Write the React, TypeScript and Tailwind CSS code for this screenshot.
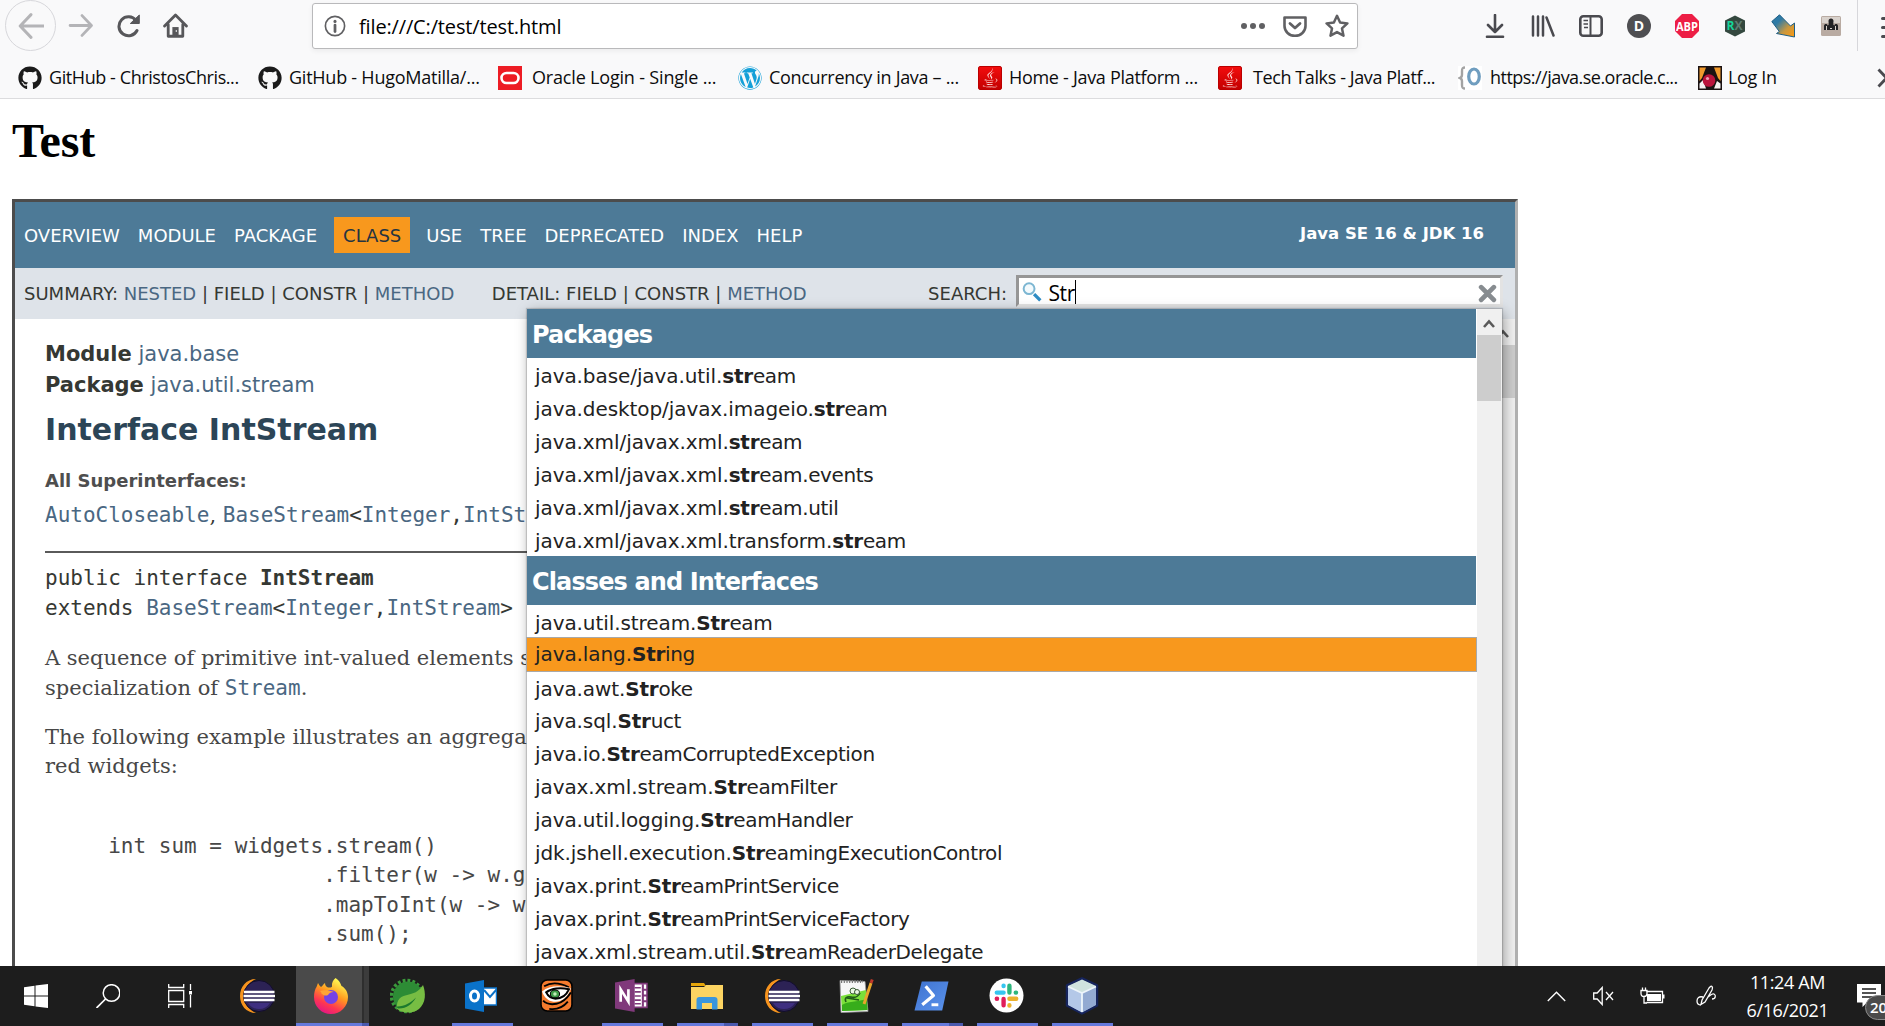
import React from 'react';
import { FaGithub, FaWordpress, FaJava } from 'react-icons/fa';

type IconProps = { children: React.ReactNode; className?: string; box?: string };

function Icon({ children, className = 'size-6', box = '0 0 24 24' }: IconProps) {
  return (
    <svg viewBox={box} className={`shrink-0 ${className}`} fill="none">
      {children}
    </svg>
  );
}

/* ---------- browser chrome ---------- */

function NavButtons() {
  return (
    <div className="flex items-center text-[#57575a]">
      <div className="flex size-[51px] items-center justify-center rounded-full border border-[#d7d7db] text-[#b4b4b7]">
        <Icon className="size-[26px]">
          <path d="M12 1.500 2 12l10 10.500M2.500 12H24" stroke="currentColor" strokeWidth="2.700" strokeLinecap="round" strokeLinejoin="round" />
        </Icon>
      </div>
      <Icon className="ml-3 size-[25px] text-[#b4b4b7]">
        <path d="M13.500 2.500 22.500 12l-9 9.500M22 12H2" stroke="currentColor" strokeWidth="2.700" strokeLinecap="round" strokeLinejoin="round" />
      </Icon>
      <Icon className="ml-6 size-6">
        <path d="M20 16.500A9.500 9.500 0 1 1 19 6.500" stroke="currentColor" strokeWidth="3" strokeLinecap="round" />
        <path d="M22.300 1v8.500h-9z" fill="currentColor" stroke="currentColor" strokeWidth="1" strokeLinejoin="round" />
      </Icon>
      <Icon className="ml-[22px] size-[25px]">
        <path d="M1.500 12.500 12 2l10.500 10.500M5 11v11.300h14V11" stroke="currentColor" strokeWidth="2.700" strokeLinecap="round" strokeLinejoin="round" />
        <path d="M9 22v-8.500h6V22z" fill="currentColor" />
        <path d="M12.800 16.500v1.500" stroke="#fff" strokeWidth="1.200" />
      </Icon>
    </div>
  );
}

function UrlBar() {
  return (
    <div className="ml-[124px] flex h-[46px] w-[1046px] shrink-0 items-center rounded-[3px] border border-[#b9b9bb] bg-white pl-[11px] pr-2 text-[#606063] shadow-[0_2px_5px_rgba(0,0,0,0.06)]">
      <Icon className="size-[22px]">
        <circle cx="12" cy="12" r="10.500" stroke="currentColor" strokeWidth="1.800" />
        <circle cx="12" cy="7" r="1.700" fill="currentColor" />
        <path d="M12 11v7" stroke="currentColor" strokeWidth="3" strokeLinecap="round" />
      </Icon>
      <span className="ml-[13px] flex-1 pt-0.5 font-['Open_Sans',sans-serif] text-[20px] tracking-[-0.15px] text-black">file:///C:/test/test.html</span>
      <Icon className="h-6 w-6">
        <circle cx="3" cy="12" r="3" fill="currentColor" />
        <circle cx="12" cy="12" r="3" fill="currentColor" />
        <circle cx="21" cy="12" r="3" fill="currentColor" />
      </Icon>
      <Icon className="ml-[18px] size-6">
        <path d="M1.500 3.500h21v8.500a10.500 9.800 0 0 1-21 0z" stroke="currentColor" strokeWidth="2.600" strokeLinejoin="round" />
        <path d="m7 9.500 5 4.500 5-4.500" stroke="currentColor" strokeWidth="2.800" strokeLinecap="round" strokeLinejoin="round" />
      </Icon>
      <Icon className="ml-[18px] size-6">
        <path d="m12 1.800 3.100 6.700 7.300.9-5.400 5 1.500 7.300L12 18.100l-6.500 3.600L7 14.400l-5.400-5 7.300-.9z" stroke="currentColor" strokeWidth="2.500" strokeLinejoin="round" />
      </Icon>
    </div>
  );
}

function ToolbarIcons() {
  return (
    <div className="ml-[125px] flex items-center gap-6 text-[#4a4a4f]">
      <Icon>
        <path d="M12 1v17M5 11l7 7 7-7" stroke="currentColor" strokeWidth="2.600" strokeLinecap="round" strokeLinejoin="round" />
        <path d="M4 22.800h16" stroke="currentColor" strokeWidth="2.600" strokeLinecap="round" />
      </Icon>
      <Icon>
        <path d="M2 2.500v19M7 2.500v19M12 2.500v19M15.500 3.500l7 18" stroke="currentColor" strokeWidth="2.500" strokeLinecap="round" />
      </Icon>
      <Icon>
        <rect x="1.300" y="2.300" width="21.400" height="19.400" rx="3" stroke="currentColor" strokeWidth="2.600" />
        <path d="M11.500 2.500v19" stroke="currentColor" strokeWidth="2" />
        <path d="M4.500 6.500H9M4.500 10H9M5 13.500h4" stroke="currentColor" strokeWidth="1.500" />
      </Icon>
      <Icon>
        <circle cx="12" cy="12" r="12" fill="#4f4f52" />
        <text x="12" y="17" textAnchor="middle" fontSize="14" fontWeight="700" fill="#fff" fontFamily="Open Sans">D</text>
      </Icon>
      <Icon>
        <path d="M7 0h10l7 7v10l-7 7H7l-7-7V7z" fill="#ed1e45" />
        <text x="12" y="16.500" textAnchor="middle" fontSize="12" fontWeight="700" fill="#fff" fontFamily="Open Sans" textLength="22" lengthAdjust="spacingAndGlyphs">ABP</text>
      </Icon>
      <Icon>
        <path d="M12 1.500 22 6.500v11l-10 5-10-5v-11z" fill="#34483f" />
        <text x="3.500" y="16" fontSize="12" fontWeight="700" fill="#16d69a" fontFamily="Open Sans">R</text>
        <text x="11.500" y="16" fontSize="12" fontWeight="700" fill="#5f7d73" fontFamily="Open Sans">X</text>
      </Icon>
      <Icon>
        <defs>
          <linearGradient id="arrowFill" x1="0" y1="0" x2="1" y2="1">
            <stop offset="0.300" stopColor="#2f7ba6" />
            <stop offset="0.650" stopColor="#c9983f" />
            <stop offset="1" stopColor="#ff9a10" />
          </linearGradient>
        </defs>
        <path d="M8.500.8.800 7.500l7.500 10-2.800 2 18 3.500V9l-4 3z" fill="url(#arrowFill)" stroke="#1f5f86" strokeWidth="1" strokeLinejoin="round" />
      </Icon>
      <Icon>
        <rect x="2" y="2" width="20" height="20" rx="1.500" fill="#b9aba2" />
        <rect x="3" y="3" width="18" height="6" fill="#d9d2cc" />
        <path d="M5 16v-4c0-1.500 1-2 2-2s1.500.5 1.500 1.500L9.500 11c.5-.8 0-3 0-4 0-1.500 1-2.500 2.500-2.500S14.500 5.500 14.500 7c0 1-.5 3.200 0 4l1 .5c0-1 .5-1.500 1.500-1.500s2 .5 2 2v4z" fill="#232325" />
        <path d="M7.500 12v4M16.500 12v4M11 14.500h2" stroke="#d8d2cd" strokeWidth="1" />
      </Icon>
    </div>
  );
}

function JavaMark() {
  return (
    <span className="flex size-6 shrink-0 items-center justify-center rounded-[2px] border border-[#b00] bg-linear-to-b from-[#f20d0d] to-[#c40000] text-[#ffe3e0]">
      <FaJava className="size-5" />
    </span>
  );
}

const bookmarks = [
  { label: 'GitHub - ChristosChris...', text: 'ml-[7px] tracking-[-0.42px]', icon: <FaGithub className="size-6 shrink-0 text-[#1b1b1b]" /> },
  { label: 'GitHub - HugoMatilla/...', text: 'ml-[7px] tracking-[-0.24px]', icon: <FaGithub className="size-6 shrink-0 text-[#1b1b1b]" /> },
  {
    label: 'Oracle Login - Single ...',
    text: 'ml-[10px] tracking-[-0.18px]',
    icon: (
      <Icon>
        <path d="M0 0h24v24H0z" fill="#ed1c24" />
        <rect x="3.500" y="7" width="17" height="10" rx="5" stroke="#fff" strokeWidth="2.600" />
      </Icon>
    ),
  },
  {
    label: 'Concurrency in Java – ...',
    text: 'ml-[7px] tracking-[-0.31px]',
    icon: <FaWordpress className="size-6 shrink-0 text-[#14a0d8]" />,
  },
  { label: 'Home - Java Platform ...', text: 'ml-[7px] tracking-[-0.3px]', icon: <JavaMark /> },
  { label: 'Tech Talks - Java Platf...', text: 'ml-[11px] tracking-[-0.4px]', icon: <JavaMark /> },
  {
    label: 'https://java.se.oracle.c...',
    text: 'ml-[8px] tracking-[-0.53px]',
    icon: (
      <Icon>
        <path d="M0 0h24v24H0z" fill="#fff" />
        <path d="M7 1.500C4 1.500 4 3 4 5v3.500c0 2-.5 3-2 3.500 1.500.5 2 1.500 2 3.500V19c0 2 0 3.500 3 3.500" stroke="#a3a3a3" strokeWidth="2.400" />
        <ellipse cx="16" cy="10.500" rx="5.300" ry="7.500" stroke="#6f9dbf" strokeWidth="3.200" />
      </Icon>
    ),
  },
  {
    label: 'Log In',
    text: 'ml-[6px] tracking-[-0.35px]',
    icon: (
      <Icon>
        <path d="M0 0h24v24H0z" fill="#1a1212" />
        <path d="M1.500 1.500H8L4 12l-2.500 3zM22.500 1.500H16l4 10.500 2.500 3z" fill="#f19a2c" />
        <path d="M1.500 22.500v-5L5 14l3 8.500zM22.500 22.500v-5L19 15l-3 7.500z" fill="#f4f0f0" />
        <circle cx="11" cy="14.500" r="6.300" fill="#b9133c" />
        <circle cx="9.500" cy="12.500" r="1.600" fill="#f0a0b4" />
      </Icon>
    ),
  },
];

function BrowserChrome() {
  return (
    <header className="h-[99px] overflow-hidden border-b border-[#dcdcde] bg-[#f9f9fa]">
      <div className="flex h-[51px] w-[1910px] items-center pl-[5px]">
        <NavButtons />
        <UrlBar />
        <ToolbarIcons />
        <div className="ml-[14px] h-full w-px bg-[#d7d7db]" />
        <div className="ml-[23px] flex flex-col gap-1.5 pt-1">
          <i className="h-[3px] w-5 rounded bg-[#4a4a4f]" />
          <i className="h-[3px] w-5 rounded bg-[#4a4a4f]" />
          <i className="h-[3px] w-5 rounded bg-[#4a4a4f]" />
        </div>
      </div>
      <div className="flex h-[47px] w-[1920px] items-center pl-[18px] pt-[6px]">
        {bookmarks.map((b) => (
          <div key={b.label} className="flex w-[240px] shrink-0 items-center whitespace-nowrap last-of-type:w-[183px]">
            {b.icon}
            <span className={`pb-px font-['Open_Sans',sans-serif] text-[18px] leading-6 text-[#0c0c0d] ${b.text}`}>{b.label}</span>
          </div>
        ))}
        <Icon className="-ml-1 size-6">
          <path d="m1.500 3.500 8 8.500-8 8.500M10 3.500l8 8.500-8 8.500" stroke="#4a4a4f" strokeWidth="2.800" />
        </Icon>
      </div>
    </header>
  );
}

/* ---------- API documentation frame ---------- */

function A({ children }: { children: React.ReactNode }) {
  return <span className="text-[#4a6782]">{children}</span>;
}

function TopNav() {
  return (
    <nav className="flex h-[66px] items-center bg-[#4d7a97] pl-[9px] pr-[31px] text-[18px] text-white">
      <span>OVERVIEW</span>
      <span className="ml-[18px]">MODULE</span>
      <span className="ml-[18px]">PACKAGE</span>
      <span className="ml-[17px] flex h-9 items-center bg-[#f8981d] px-[9px] text-[#253441]">CLASS</span>
      <span className="ml-4">USE</span>
      <span className="ml-[18px]">TREE</span>
      <span className="ml-[18px]">DEPRECATED</span>
      <span className="ml-[18px]">INDEX</span>
      <span className="ml-[18px]">HELP</span>
      <span className="ml-auto pb-px text-[16.500px] font-bold">Java SE 16 &amp; JDK 16</span>
    </nav>
  );
}

function SubNav() {
  return (
    <div className="flex h-[51px] items-center bg-[#dee3e9] pl-[9px] text-[18px] text-[#353833]">
      <span className="whitespace-pre">SUMMARY: <A>NESTED</A> | FIELD | CONSTR | <A>METHOD</A></span>
      <span className="ml-[37.500px] whitespace-pre">DETAIL: FIELD | CONSTR | <A>METHOD</A></span>
      <span className="ml-auto">SEARCH:</span>
      <div className="mb-[5px] ml-[9px] mr-3 flex h-8 w-[487px] items-center border-3 border-b-[#e3e3e3] border-l-[#969696] border-r-[#e3e3e3] border-t-[#969696] bg-white pl-[3px] pr-[3px] text-black">
        <Icon className="mt-0.5 size-5">
          <circle cx="8.500" cy="8" r="6.500" stroke="#7cb6d2" strokeWidth="2.400" fill="#f3fafd" />
          <path d="m14.500 14.500 7.500 7.500" stroke="#2f8cc4" strokeWidth="4" />
        </Icon>
        <span className="ml-[6.500px] pt-[3px] font-['Open_Sans',sans-serif] text-[21px] leading-6 tracking-[-0.4px]">Str</span>
        <i className="mt-0.5 h-6 w-px bg-black" />
        <Icon className="ml-auto mt-1 size-[19px]">
          <path d="m4 4 16 16M20 4 4 20" stroke="#878c90" strokeWidth="6" strokeLinecap="round" />
        </Icon>
      </div>
    </div>
  );
}

function Description() {
  return (
    <main className="whitespace-pre pl-[30px] pt-5 text-[21px] text-[#353833]">
      <div className="leading-[31px]"><b>Module</b> <A>java.base</A></div>
      <div className="leading-[31px]"><b>Package</b> <A>java.util.stream</A></div>
      <h1 className="mt-[11px] text-[30px] font-bold leading-9 text-[#2c4557]">Interface IntStream</h1>
      <div className="mt-[21px] text-[18px] font-bold leading-6 text-[#4e4e4e]">All Superinterfaces:</div>
      <div className="mt-[7px] font-['DejaVu_Sans_Mono',monospace] leading-[30px]">
        <A>AutoCloseable</A><span className="font-['DejaVu_Serif',serif] text-[21px]">, </span><A>BaseStream</A>&lt;<A>Integer</A>,<A>IntSt</A>
      </div>
      <hr className="mt-[21px] h-0.5 border-0 bg-[#5a5a5a]" />
      <div className="mt-[10px] font-['DejaVu_Sans_Mono',monospace] leading-[30px]">public interface <b>IntStream</b></div>
      <div className="font-['DejaVu_Sans_Mono',monospace] leading-[30px]">extends <A>BaseStream</A>&lt;<A>Integer</A>,<A>IntStream</A>&gt;</div>
      <p className="mt-5 font-['DejaVu_Serif',serif] leading-[30px] text-[#474747]">
        A sequence of primitive int-valued elements s<br />
        specialization of <span className="font-['DejaVu_Sans_Mono',monospace]"><A>Stream</A></span>.
      </p>
      <p className="mt-5 font-['DejaVu_Serif',serif] leading-[29px] text-[#474747]">
        The following example illustrates an aggrega<br />
        red widgets:
      </p>
      <pre className="mt-[51px] font-['DejaVu_Sans_Mono',monospace] leading-[29.400px] text-[#474747]">
        {'     int sum = widgets.stream()\n'}
        {'                      .filter(w -> w.g\n'}
        {'                      .mapToInt(w -> w\n'}
        {'                      .sum();'}
      </pre>
    </main>
  );
}

type Row = [string, string, string, string?];

const packages: Row[] = [
  ['java.base/java.util.', 'str', 'eam'],
  ['java.desktop/javax.imageio.', 'str', 'eam'],
  ['java.xml/javax.xml.', 'str', 'eam'],
  ['java.xml/javax.xml.', 'str', 'eam.events'],
  ['java.xml/javax.xml.', 'str', 'eam.util'],
  ['java.xml/javax.xml.transform.', 'str', 'eam'],
];

const classes: Row[] = [
  ['java.util.stream.', 'Str', 'eam'],
  ['java.lang.', 'Str', 'ing', 'selected'],
  ['java.awt.', 'Str', 'oke'],
  ['java.sql.', 'Str', 'uct'],
  ['java.io.', 'Str', 'eamCorruptedException'],
  ['javax.xml.stream.', 'Str', 'eamFilter'],
  ['java.util.logging.', 'Str', 'eamHandler'],
  ['jdk.jshell.execution.', 'Str', 'eamingExecutionControl'],
  ['javax.print.', 'Str', 'eamPrintService'],
  ['javax.print.', 'Str', 'eamPrintServiceFactory'],
  ['javax.xml.stream.util.', 'Str', 'eamReaderDelegate'],
];

function ResultGroup({ title, rows }: { title: string; rows: Row[] }) {
  return (
    <section>
      <h2 className="h-[49px] bg-[#4d7a97] pl-[5px] text-[24px] font-bold leading-[53px] tracking-[-0.88px] text-white">{title}</h2>
      <ul>
        {rows.map(([head, hit, tail, selected]) => (
          <li
            key={head + tail}
            className={`h-[32.950px] pl-2 text-[20px] text-[#222] ${selected ? 'bg-[#f8981d] leading-[33px] outline outline-[#a9a9a9]' : 'pt-[2px] leading-[32px]'}`}
          >
            <span className="tracking-[-0.08px]">{head}</span>
            <b className="tracking-[-0.25px]">{hit}</b>
            <span className="tracking-[-0.37px]">{tail}</span>
          </li>
        ))}
      </ul>
    </section>
  );
}

function ScrollArrow() {
  return (
    <Icon className="h-[10px] w-3" box="0 0 12 10">
      <path d="m1 8 5-5.500L11 8" stroke="#5a5a5a" strokeWidth="2.600" />
    </Icon>
  );
}

function SearchResults() {
  return (
    <div className="absolute left-[512px] top-[107px] flex h-[680px] w-[975px] bg-white shadow-[0_0_1px_1px_rgba(0,0,0,0.15),2px_3px_12px_rgba(0,0,0,0.35)]">
      <div className="w-[949px]">
        <ResultGroup title="Packages" rows={packages} />
        <ResultGroup title="Classes and Interfaces" rows={classes} />
      </div>
      <div className="ml-px flex w-[25px] flex-col items-center bg-[#f0f0f0] pr-px">
        <div className="flex h-[26px] items-center pt-1"><ScrollArrow /></div>
        <div className="h-[66px] w-full bg-[#cdcdcd]" />
      </div>
    </div>
  );
}

function DocFrame() {
  return (
    <div className="relative ml-3 mt-[34px] h-[767px] w-[1506px] overflow-hidden border-l-3 border-r-3 border-t-3 border-l-[#4c4c4c] border-r-[#b0b0b0] border-t-[#4c4c4c] font-['DejaVu_Sans',sans-serif]">
      <TopNav />
      <SubNav />
      <div className="flex h-[647px]">
        <div className="min-w-0 flex-1 overflow-hidden"><Description /></div>
        <div className="flex w-[25px] flex-col items-center bg-[#f0f0f0]">
          <div className="flex h-[26px] items-center pt-1"><ScrollArrow /></div>
          <div className="h-[53px] w-full bg-[#cdcdcd]" />
        </div>
      </div>
      <SearchResults />
    </div>
  );
}

/* ---------- taskbar ---------- */

function EclipseLogo() {
  return (
    <Icon className="mr-0.5 size-9" box="0 0 36 36">
      <path d="M17 1C7 1 1 9 1 18s6 17 16 17C10 32 6 26 6 18S10 4 17 1z" fill="#f7941e" />
      <circle cx="20" cy="18" r="15.500" fill="#2c2255" stroke="#120d2c" strokeWidth="1" />
      <path d="M9 25h22a13 13 0 0 1-22 0z" fill="#3f2f80" />
      <path d="M5 14h30.500M4.500 18h31.500M5 22h30.500" stroke="#fff" strokeWidth="2.300" />
    </Icon>
  );
}

function FirefoxLogo() {
  return (
    <Icon className="size-9" box="0 0 36 36">
      <defs>
        <linearGradient id="foxBody" x1="0.800" y1="0" x2="0.300" y2="1">
          <stop offset="0.100" stopColor="#fff44f" />
          <stop offset="0.450" stopColor="#ff9a1f" />
          <stop offset="0.750" stopColor="#ff3750" />
          <stop offset="1" stopColor="#e31587" />
        </linearGradient>
      </defs>
      <path d="M22.500 0c4 3 5 5 6 8 4 2 6.500 6.500 6.500 11 0 9.500-7.500 17-17 17S1 28.500 1 19c0-4 1-8 2.500-10L5 5c1 2 2 3 3 4 2-1 2-3 4-4 0 2 1 4 3 4.500 2 0 4 0 4-1C18.500 5 20 2 22.500 0z" fill="url(#foxBody)" />
      <circle cx="18" cy="19" r="7" fill="#7542e5" />
      <path d="M7 13c4-1 8-1 14 1-3 0-5 1-6 3-2 1-4 1-7-2 1-.5 0-1-1-2z" fill="#ffa436" />
    </Icon>
  );
}

function SpringLogo() {
  return (
    <Icon className="size-9" box="0 0 36 36">
      <circle cx="17" cy="18" r="15.500" fill="none" stroke="#3b9a3c" strokeWidth="3.500" strokeDasharray="2.800 2.070" />
      <circle cx="18" cy="18.500" r="15" fill="#2d8c35" />
      <path d="M33 7c3 8 3 18-4 24-6 5-16 4.500-22 0-1-10 4-13 12-14.500C26 15 30 12 33 7z" fill="#77bd43" />
      <path d="M6 28.500c8 .5 15-4 20-9-4 7-10 11.500-18 11z" fill="#1c7a2e" />
    </Icon>
  );
}

function OutlookLogo() {
  return (
    <Icon className="mr-1 size-8" box="0 0 32 32">
      <path d="M17 8h14.500v17H17z" fill="#fff" stroke="#0a72c9" strokeWidth="1.500" />
      <path d="m19 10 6 7 7-8" stroke="#0a72c9" strokeWidth="2" />
      <path d="M0 3.500 19 0v32L0 28.500z" fill="#0a72c9" />
      <ellipse cx="9.500" cy="16" rx="4" ry="5" stroke="#fff" strokeWidth="3" />
    </Icon>
  );
}

function TigerLogo() {
  return (
    <Icon className="mr-0.5 size-[33px]" box="0 0 32 32">
      <rect x="1" y="1" width="30" height="30" rx="6" fill="#f47a2d" stroke="#000" strokeWidth="1.500" />
      <path d="M4 7c7-4 16-3 24 1" stroke="#000" strokeWidth="1.800" />
      <path d="M2 12C9 6 20 6 30 9c-3 9-9 14-17 13C8 21 4 18 2 12z" fill="#fff" />
      <path d="M6 13c5-4 14-5 22-3-3 7-8 9-13 9-4 0-7-2-9-6z" stroke="#000" strokeWidth="2" />
      <ellipse cx="14.500" cy="14.500" rx="4.500" ry="3.800" fill="#3f9a48" stroke="#000" strokeWidth="1" />
      <circle cx="14.500" cy="14.500" r="1.700" fill="#c3ecb8" />
      <path d="M3 21c3 3 8 4 13 3 5-1 10-5 14-11M9 29c7 1 13-1 18-7" stroke="#000" strokeWidth="1.800" />
    </Icon>
  );
}

function OneNoteLogo() {
  return (
    <Icon className="mr-0.5 size-[33px]" box="0 0 32 32">
      <path d="M18 4.500h13v23H18z" fill="#fff" stroke="#80397b" strokeWidth="1.500" />
      <path d="M27 5v22M27 10.500h4M27 16h4M27 21.500h4" stroke="#80397b" strokeWidth="2" />
      <path d="M19 8.500h6M19 12.500h6M19 16.500h6M19 20.500h6M19 24h6" stroke="#80397b" strokeWidth="1.500" />
      <path d="M0 3.500 19 0v32L0 28.500z" fill="#80397b" />
      <path d="M5.500 22V10l7.500 12V10" stroke="#fff" strokeWidth="2.600" />
    </Icon>
  );
}

function FolderLogo() {
  return (
    <Icon className="mr-0.5 size-8" box="0 0 32 32">
      <path d="M0 3h13l2 3H0z" fill="#e5a50a" />
      <path d="M0 7h13l2-2h17v24H0z" fill="#fcd462" />
      <path d="M5.500 29.500V20q0-3 3-3h15q3 0 3 3v9.500H21V23H11v6.500z" fill="#3a96dd" />
    </Icon>
  );
}

function NotepadLogo() {
  return (
    <Icon className="mr-1 h-9 w-9" box="0 0 36 36">
      <path d="m2 2.500 25 1 3 30-27 1z" fill="#f6f6f6" stroke="#999" strokeWidth="0.800" />
      <path d="M3 3.500h22" stroke="#777" strokeWidth="3" strokeDasharray="1.200 1.500" />
      <path d="m3 18 25-6 1.500 20L4 33z" fill="#7be03a" />
      <path d="M4 27c6-4 14-3 25-6l.5 11L4 33z" fill="#37ad1b" />
      <path d="M8 24c-2-4 1-6 5-5s7 0 9-4M9 20l12 2" stroke="#1f5b17" strokeWidth="1.600" />
      <circle cx="15" cy="13" r="3" fill="#eaf7e4" stroke="#3a5a34" />
      <circle cx="19" cy="14" r="2.500" fill="#eaf7e4" stroke="#3a5a34" />
      <path d="m26 26 7-21" stroke="#e8a62b" strokeWidth="3" />
      <path d="m33 5 1.300-3.500" stroke="#c0392b" strokeWidth="3" />
    </Icon>
  );
}

function PowerShellLogo() {
  return (
    <Icon className="mr-0.5 h-[32px] w-[35px]" box="0 0 36 32">
      <defs>
        <linearGradient id="psFill" x1="0" y1="0" x2="1" y2="1">
          <stop stopColor="#3f73d0" />
          <stop offset="1" stopColor="#5b93ec" />
        </linearGradient>
      </defs>
      <path d="M8 1h27.500L29 31H.5z" fill="url(#psFill)" />
      <path d="m12 6 8 9.500L8.500 25" stroke="#fff" strokeWidth="3.300" strokeLinejoin="round" />
      <path d="M18 25h7" stroke="#fff" strokeWidth="3" />
    </Icon>
  );
}

function SlackLogo() {
  return (
    <Icon className="mr-0.5 h-[35px] w-[35px]" box="0 0 36 36">
      <circle cx="18" cy="18" r="17.500" fill="#fff" />
      <g strokeWidth="4.500" strokeLinecap="round">
        <path d="M15 8v.300M8 15h7" stroke="#36c5f0" />
        <path d="M21 8v7M27.500 15h.3" stroke="#2eb67d" />
        <path d="M21 21.300h7M21 28v.300" stroke="#ecb22e" />
        <path d="M15 21.500V28M8 21.300h.3" stroke="#e01e5a" />
      </g>
    </Icon>
  );
}

function CubeLogo() {
  return (
    <Icon className="mr-0.5 size-[38px]" box="0 0 38 38">
      <path d="M19 1.500 34 8.500v20L19 36.500 4 28.500v-20z" fill="#b7cde0" stroke="#16245c" strokeWidth="2.500" strokeLinejoin="round" />
      <path d="M19 2.500 33 9l-14 6.500L5 9z" fill="#cfe2df" />
      <path d="M5 9.500 19 16v19.500L5 28z" fill="#b4c8e8" />
      <path d="M19 16 33 9.500V28l-14 7.500z" fill="#93aad2" />
      <path d="M19 16v19M5 9.500 19 16l14-6.500" stroke="#eef5fb" strokeWidth="1.800" />
    </Icon>
  );
}

const apps: { name: string; icon: React.ReactNode; bar: 'none' | 'one' | 'many' | 'active' }[] = [
  { name: 'eclipse', icon: <EclipseLogo />, bar: 'none' },
  { name: 'firefox', icon: <FirefoxLogo />, bar: 'active' },
  { name: 'spring', icon: <SpringLogo />, bar: 'none' },
  { name: 'outlook', icon: <OutlookLogo />, bar: 'one' },
  { name: 'tiger', icon: <TigerLogo />, bar: 'none' },
  { name: 'onenote', icon: <OneNoteLogo />, bar: 'one' },
  { name: 'folder', icon: <FolderLogo />, bar: 'many' },
  { name: 'eclipse-2', icon: <EclipseLogo />, bar: 'one' },
  { name: 'notepad', icon: <NotepadLogo />, bar: 'one' },
  { name: 'powershell', icon: <PowerShellLogo />, bar: 'many' },
  { name: 'slack', icon: <SlackLogo />, bar: 'one' },
  { name: 'cube', icon: <CubeLogo />, bar: 'one' },
];

function AppButton({ icon, bar }: { icon: React.ReactNode; bar: string }) {
  const active = bar === 'active';
  return (
    <div className="flex w-[75px] flex-col items-center">
      <div className={`flex h-[57px] w-[73px] ${active ? 'bg-[#4a4a4a]' : ''}`}>
        <div className={`flex flex-1 items-center justify-center pt-[2px] ${active ? 'pr-[3px]' : ''}`}>
          <div className={active ? '-mr-[7px]' : ''}>{icon}</div>
        </div>
        {active && <div className="w-[7px] border-l-2 border-[#2e2e2e] bg-[#3c3c3c]" />}
      </div>
      <div className={`flex h-[3px] ${active ? 'w-[73px]' : 'w-[61px]'}`}>
        {bar !== 'none' && <div className="flex-1 bg-[#6579dc]" />}
        {active && <div className="w-[7px] bg-[#4a59ae]" />}
        {bar === 'many' && <div className="w-[14px] bg-[#4a59ae]" />}
      </div>
    </div>
  );
}

function Taskbar() {
  return (
    <footer className="flex h-[60px] overflow-hidden bg-[#1d1d1d] text-white">
      <div className="flex w-[220px] items-center pl-6">
        <Icon>
          <path d="m0 3.300 10.500-1.500v9.700H0zM11.500 1.600 24 0v11.500H11.500zM0 12.500h10.500v9.700L0 20.700zM11.500 12.500H24V24l-12.500-1.600z" fill="#fff" />
        </Icon>
        <Icon className="ml-12 size-6">
          <circle cx="15.500" cy="9" r="8.300" stroke="#fff" strokeWidth="1.500" />
          <path d="M9.500 15 .5 24" stroke="#fff" strokeWidth="1.700" />
        </Icon>
        <Icon className="ml-12 size-6">
          <path d="M.7 6.500h15v11H.7zM.7 0v3.500h15V0M.7 24v-3.500h15V24M22.500 0v6M22.500 11v12.500" stroke="#fff" strokeWidth="1.300" />
          <path d="M21 7h3v3.500h-3z" fill="#fff" />
        </Icon>
      </div>
      {apps.map((a) => (
        <AppButton key={a.name} icon={a.icon} bar={a.bar} />
      ))}
      <div className="ml-auto flex items-center">
        <Icon className="h-[11px] w-[19px]" box="0 0 19 11">
          <path d="m.8 10 8.700-8.700 8.700 8.700" stroke="#fff" strokeWidth="1.400" />
        </Icon>
        <Icon className="ml-[27px] h-5 w-[21px]" box="0 0 21 20">
          <path d="M.7 7v6h3.500l5 5.500v-17L4.200 7zM13 6l7 8M20 6l-7 8" stroke="#fff" strokeWidth="1.300" />
        </Icon>
        <Icon className="ml-[26px] h-5 w-[25px]" box="0 0 25 20">
          <path d="M6.500 5.500h16v11h-16" stroke="#fff" strokeWidth="1.300" />
          <path d="M7 8h14v7H7zM23 8.500h1.500v4H23z" fill="#fff" />
          <path d="M1 4.500h6v3q0 3-3 3t-3-3zM2.500 1.500v3M5.500 1.500v3M4 10.500v6.500h3" stroke="#fff" strokeWidth="1.300" />
        </Icon>
        <Icon className="ml-[31px] h-[22px] w-[21px]" box="0 0 21 22">
          <path d="m6 15 7-12q2-2.500 3-1.500t0 3.500l-7 12-4 2.500zM7 12C3 11 1 13 1 16s2 4 4 4M12 12c3-2 4-4 6-3s2 5-2 5" stroke="#fff" strokeWidth="1.300" />
        </Icon>
        <div className="ml-[25px] w-[91px] pb-px text-center font-['Open_Sans',sans-serif] text-[18px] leading-7 tracking-[-0.38px]">
          <div>11:24 AM</div>
          <div>6/16/2021</div>
        </div>
        <div className="relative ml-6 h-9 w-[28px]">
          <Icon className="mt-[6px] size-6">
            <path d="M0 0h24v18.500H10L5.500 23v-4.500H0z" fill="#fff" />
            <path d="M5 5h14M5 9h14M5 13h14" stroke="#1d1d1d" strokeWidth="1.300" />
          </Icon>
          <div className="absolute left-2 top-[17px] flex h-[25px] w-[38px] items-center rounded-full border border-[#8b8b8b] bg-[#4b4b4b] pl-1 font-['Open_Sans',sans-serif] text-[15px] font-semibold">20</div>
        </div>
      </div>
    </footer>
  );
}

export default function App() {
  return (
    <div className="h-[1026px] w-[1885px] overflow-hidden bg-white">
      <BrowserChrome />
      <div className="h-[867px] overflow-hidden">
        <h1 className="pl-3 pt-[18px] font-['Liberation_Serif',serif] text-[48px] font-bold leading-[48px] tracking-[-0.1px] text-black">Test</h1>
        <DocFrame />
      </div>
      <Taskbar />
    </div>
  );
}
